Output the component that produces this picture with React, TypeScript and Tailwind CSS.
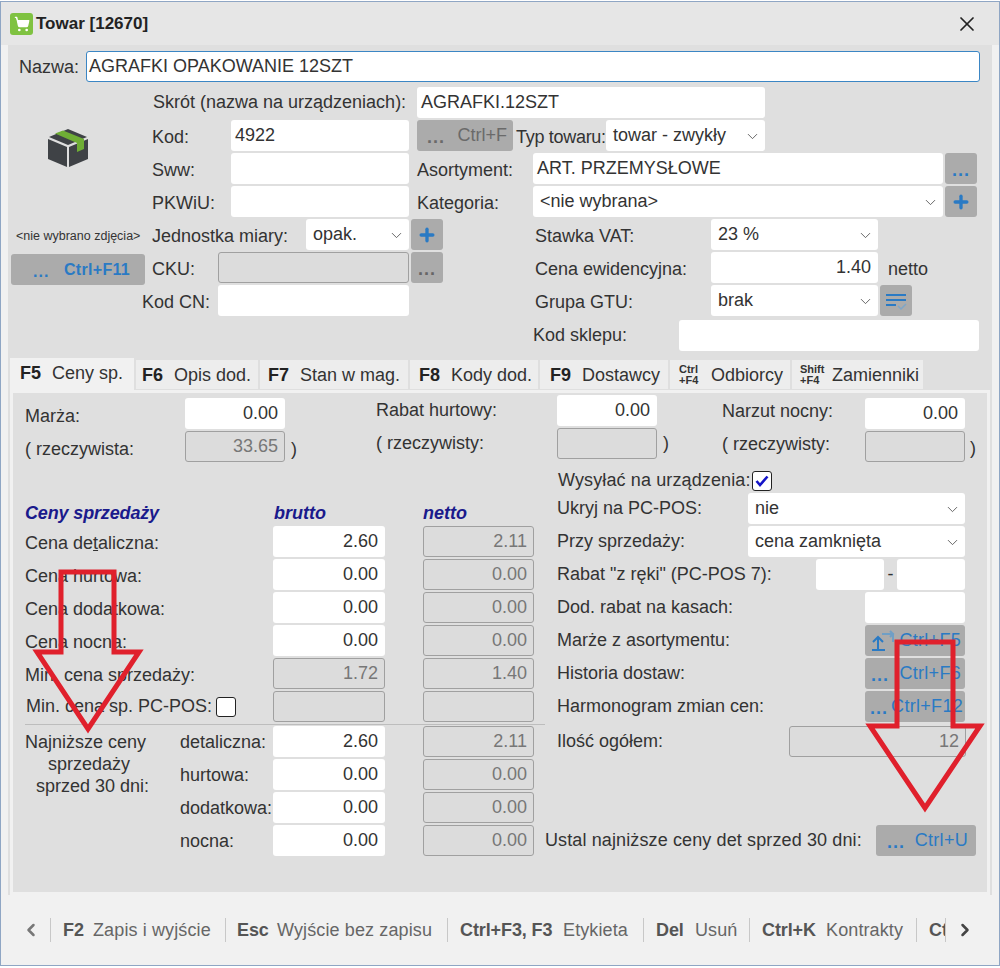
import React from 'react';
import { ChevronDown, ChevronLeft, ChevronRight, Plus, ShoppingCart, X } from 'lucide-react';

const Input = ({ value = '', className = '', right = false }: { value?: string; className?: string; right?: boolean }) => (
  <div className={`h-[31px] shrink-0 bg-white rounded-[3px] flex items-center text-[#333] whitespace-nowrap ${right ? 'justify-end px-[7px]' : 'px-[4px]'} ${className}`}>
    {value}
  </div>
);

const Disabled = ({ value = '', className = '' }: { value?: string; className?: string }) => (
  <div className={`h-[31px] shrink-0 bg-[#dcdcdc] border border-[#a0a0a0] rounded-[3px] flex items-center justify-end px-[6px] text-[#777] ${className}`}>
    {value}
  </div>
);

const Select = ({ value, className = '' }: { value: string; className?: string }) => (
  <div className={`h-[31px] shrink-0 bg-white rounded-[3px] flex items-center justify-between pl-[7px] pr-[4px] text-[#333] ${className}`}>
    <span className="whitespace-nowrap">{value}</span>
    <ChevronDown size={17} strokeWidth={1.25} className="text-[#555] shrink-0 mt-[2px]" />
  </div>
);

const Dots = ({ className = 'text-[#2a7ac4]' }: { className?: string }) => (
  <span className={`font-bold leading-none tracking-[1px] self-end pb-[5px] ${className}`}>...</span>
);

const IconButton = ({ children, className = '' }: { children: React.ReactNode; className?: string }) => (
  <div className={`w-[32px] h-[31px] shrink-0 bg-[#ababab] rounded-[3px] flex items-center justify-center ${className}`}>
    {children}
  </div>
);

const KeyButton = ({ keys, icon, className = '' }: { keys: string; icon?: React.ReactNode; className?: string }) => (
  <div className={`h-[31px] shrink-0 bg-[#ababab] rounded-[3px] flex items-center justify-between px-[6px] text-[#2a7ac4] whitespace-nowrap ${className}`}>
    {icon ?? <Dots />}
    <span className="tracking-[0.3px]">{keys}</span>
  </div>
);

const PlusIcon = () => <Plus size={20} strokeWidth={4} className="text-[#2a7ac4]" />;

const Row = ({ children, className = '' }: { children: React.ReactNode; className?: string }) => (
  <div className={`flex items-center h-[33px] shrink-0 ${className}`}>{children}</div>
);

const BoxIcon = () => (
  <svg width="40" height="38" viewBox="0 0 40 38">
    <path d="M20 0 L39 8 L20 16 L1 8 Z" fill="#3f4246" />
    <path d="M0 10 L19 18 V38 L0 30 Z" fill="#3f4246" />
    <path d="M21 18 L40 10 V30 L21 38 Z" fill="#3f4246" />
    <path d="M7 4.5 L15 1.5 L36 10 L36 20 L29 23 L29 14 Z" fill="#6fae35" />
  </svg>
);

const TabKey = ({ top, bottom }: { top: string; bottom: string }) => (
  <span className="w-[32px] shrink-0 flex flex-col text-[11px] leading-[11px] font-bold items-start">
    <span>{top}</span>
    <span>{bottom}</span>
  </span>
);

const tabs: { key?: string; top?: string; bottom?: string; label: string; box: string }[] = [
  { key: 'F6', label: 'Opis dod.', box: 'w-[122px] pl-[6px]' },
  { key: 'F7', label: 'Stan w mag.', box: 'w-[148px] pl-[8px]' },
  { key: 'F8', label: 'Kody dod.', box: 'w-[128px] pl-[9px]' },
  { key: 'F9', label: 'Dostawcy', box: 'w-[128px] pl-[10px]' },
  { top: 'Ctrl', bottom: '+F4', label: 'Odbiorcy', box: 'w-[120px] pl-[9px]' },
  { top: 'Shift', bottom: '+F4', label: 'Zamienniki', box: 'w-[131px] pl-[8px]' },
];

const priceRows = [
  { label: <>Cena de<u>t</u>aliczna:</>, id: 'det', brutto: '2.60', netto: '2.11' },
  { label: 'Cena hurtowa:', id: 'hurt', brutto: '0.00', netto: '0.00' },
  { label: 'Cena dodatkowa:', id: 'dod', brutto: '0.00', netto: '0.00' },
  { label: 'Cena nocna:', id: 'noc', brutto: '0.00', netto: '0.00' },
];

const lowestRows = [
  ['detaliczna:', '2.60', '2.11'],
  ['hurtowa:', '0.00', '0.00'],
  ['dodatkowa:', '0.00', '0.00'],
  ['nocna:', '0.00', '0.00'],
];

const footerItems = [
  { key: 'F2', label: 'Zapis i wyjście', box: 'w-[175px]', keyBox: 'w-[30px] ml-[12px]' },
  { key: 'Esc', label: 'Wyjście bez zapisu', box: 'w-[222px]', keyBox: 'w-[40px] ml-[11px]' },
  { key: 'Ctrl+F3, F3', label: 'Etykieta', box: 'w-[196px]', keyBox: 'w-[103px] ml-[12px]' },
  { key: 'Del', label: 'Usuń', box: 'w-[106px]', keyBox: 'w-[39px] ml-[12px]' },
  { key: 'Ctrl+K', label: 'Kontrakty', box: 'w-[167px]', keyBox: 'w-[64px] ml-[12px]' },
];

const FooterSep = () => <div className="w-px h-[24px] bg-[#c8c8c8] shrink-0" />;

export default function App() {
  return (
    <div className="relative w-[1000px] h-[968px] bg-white overflow-hidden text-[18px] text-[#333]" style={{ fontFamily: '"Liberation Sans", Arial, sans-serif' }}>
      <div className="mt-px h-[965px] flex flex-col bg-[#f1f1f1] border border-[#8fa6c4]">
        {/* Title */}
        <div className="h-[43px] shrink-0 bg-[#e6e6e6] flex items-center pl-[9px] pr-[20px]">
          <div className="w-[23px] h-[22px] rounded-[3px] bg-[#7fc241] flex items-center justify-center">
            <ShoppingCart size={16} fill="white" className="text-white" />
          </div>
          <span className="ml-[3px] font-bold text-[17px] text-[#222]">Towar [12670]</span>
          <X size={24} strokeWidth={1.75} className="ml-auto text-[#222]" />
        </div>

        {/* Body */}
        <div className="flex-1 flex flex-col bg-[#dfdfdf] ml-[7px] mr-[7px] relative">
          <div className="h-[41px] shrink-0 flex items-start pl-[11px] pt-[6px]">
            <span className="w-[67px] h-[31px] flex items-center pt-[2px]">Nazwa:</span>
            <Input value="AGRAFKI OPAKOWANIE 12SZT" className="w-[894px] border border-[#3b86c4] !px-[2px]" />
          </div>

          {/* Top form */}
          <div className="flex h-[269px] shrink-0">
            <div className="w-[134px] shrink-0 flex flex-col items-start">
              <div className="mt-[43px] ml-[40px] h-[38px]"><BoxIcon /></div>
              <div className="mt-[62px] ml-[8px] h-[15px] leading-[15px] text-[12.5px] whitespace-nowrap">&lt;nie wybrano zdjęcia&gt;</div>
              <KeyButton keys="Ctrl+F11" className="mt-[10px] ml-[3px] w-[134px] pl-[22px] pr-[15px] text-[16px] font-bold" />
            </div>
            <div className="flex flex-col">
              <Row className="pl-[11px]">
                <span className="w-[264px] whitespace-nowrap">Skrót (nazwa na urządzeniach):</span>
                <Input value="AGRAFKI.12SZT" className="w-[348px]" />
              </Row>
              <Row className="pl-[10px] [&>span]:pt-[4px]">
                <span className="w-[79px]">Kod:</span>
                <Input value="4922" className="w-[178px]" />
                <div className="w-[96px] h-[31px] ml-[8px] bg-[#ababab] rounded-[3px] flex items-center justify-between pl-[10px] pr-[6px] text-[#6a6a6a] whitespace-nowrap">
                  <Dots className="text-[#6a6a6a]" />
                  <b className="font-normal">Ctrl+F</b>
                </div>
                <span className="w-[93px] pl-[3px] whitespace-nowrap tracking-[-0.3px]">Typ towaru:</span>
                <Select value="towar - zwykły" className="w-[159px]" />
              </Row>
              <Row className="pl-[10px] [&>span]:pt-[4px]">
                <span className="w-[79px]">Sww:</span>
                <Input className="w-[178px]" />
                <span className="ml-[8px] w-[116px]">Asortyment:</span>
                <Input value="ART. PRZEMYSŁOWE" className="w-[410px]" />
                <IconButton className="ml-[2px]"><Dots /></IconButton>
              </Row>
              <Row className="pl-[10px] [&>span]:pt-[4px]">
                <span className="w-[79px]">PKWiU:</span>
                <Input className="w-[178px]" />
                <span className="ml-[8px] w-[116px]">Kategoria:</span>
                <Select value="<nie wybrana>" className="w-[410px]" />
                <IconButton className="ml-[2px]"><PlusIcon /></IconButton>
              </Row>
              <Row className="pl-[10px] [&>span]:pt-[4px]">
                <span className="w-[154px] whitespace-nowrap">Jednostka miary:</span>
                <Select value="opak." className="w-[103px]" />
                <IconButton className="ml-[2px]"><PlusIcon /></IconButton>
                <span className="ml-[92px] w-[176px]">Stawka VAT:</span>
                <Select value="23 %" className="w-[167px]" />
              </Row>
              <Row className="pl-[10px] [&>span]:pt-[4px]">
                <span className="w-[66px]">CKU:</span>
                <Disabled className="w-[191px] bg-[#d8d8d8]" />
                <IconButton className="ml-[2px]"><Dots className="text-[#666]" /></IconButton>
                <span className="ml-[92px] w-[176px] whitespace-nowrap">Cena ewidencyjna:</span>
                <Input value="1.40" right className="w-[167px]" />
                <span className="ml-[10px]">netto</span>
              </Row>
              <Row className="[&>span]:pt-[4px]">
                <span className="w-[76px] whitespace-nowrap">Kod CN:</span>
                <Input className="w-[191px]" />
                <span className="ml-[126px] w-[176px]">Grupa GTU:</span>
                <Select value="brak" className="w-[167px]" />
                <IconButton className="ml-[2px]">
                  <svg width="22" height="20" viewBox="0 0 22 20" fill="none" stroke="#2a7ac4" strokeWidth="2">
                    <path d="M1 4h20M1 9h20M1 14h10" />
                    <path d="M13 15l3 3 5-5" stroke="#7ea6c8" strokeWidth="1.5" />
                  </svg>
                </IconButton>
              </Row>
              <Row className="pl-[391px] mt-[2px]">
                <span className="w-[146px] whitespace-nowrap">Kod sklepu:</span>
                <Input className="w-[300px]" />
              </Row>
            </div>
          </div>

          {/* Tabs */}
          <div className="flex items-stretch h-[29px] shrink-0 pl-[2px] mt-[5px] gap-[2px]">
            <div className="w-[124px] -mt-[2px] -mb-[1px] bg-[#f1f1f1] flex items-center pl-[10px] pb-[2px]">
              <b className="w-[32px] text-[#222]">F5</b>
              <span className="whitespace-nowrap">Ceny sp.</span>
            </div>
            {tabs.map(t => (
              <div key={t.label} className={`${t.box} bg-[#ededed] flex items-center pt-[1px]`}>
                {t.key ? <b className="w-[32px] shrink-0 text-[#222]">{t.key}</b> : <TabKey top={t.top ?? ''} bottom={t.bottom ?? ''} />}
                <span className="whitespace-nowrap">{t.label}</span>
              </div>
            ))}
          </div>

          {/* Panel */}
          <div className="flex-1 mt-px border-[3px] border-[#f1f1f1] ml-[2px] mr-[2px] bg-[#dfdfdf] pl-[12px]">
            <div className="flex h-[71px]">
              <div className="w-[351px] shrink-0 flex flex-col pt-[4px]">
                <Row className="[&>span]:pt-[6px]">
                  <span className="w-[160px]">Marża:</span>
                  <Input value="0.00" right className="w-[100px]" />
                </Row>
                <Row className="[&>span]:pt-[6px]">
                  <span className="w-[160px]">( rzeczywista:</span>
                  <Disabled value="33.65" className="w-[100px]" />
                  <span className="ml-[6px]">)</span>
                </Row>
              </div>
              <div className="w-[346px] shrink-0 flex flex-col pt-[1px]">
                <Row>
                  <span className="w-[181px]">Rabat hurtowy:</span>
                  <Input value="0.00" right className="w-[100px]" />
                </Row>
                <Row>
                  <span className="w-[181px]">( rzeczywisty:</span>
                  <Disabled className="w-[100px]" />
                  <span className="ml-[6px]">)</span>
                </Row>
              </div>
              <div className="flex flex-col pt-[4px]">
                <Row className="[&>span]:pb-[4px]">
                  <span className="w-[143px]">Narzut nocny:</span>
                  <Input value="0.00" right className="w-[100px]" />
                </Row>
                <Row className="[&>span]:pb-[4px]">
                  <span className="w-[143px]">( rzeczywisty:</span>
                  <Disabled className="w-[100px]" />
                  <span className="ml-[5px] !pb-0 !pt-[4px]">)</span>
                </Row>
              </div>
            </div>

            <div className="flex">
              {/* Prices */}
              <div className="w-[520px] shrink-0 flex flex-col pt-[38px]">
                <div className="h-[22px] flex items-center font-bold italic text-[#1a1a8c]">
                  <span className="w-[249px] tracking-[-0.15px]">Ceny sprzedaży</span>
                  <span className="w-[149px]">brutto</span>
                  <span>netto</span>
                </div>
                <div className="mt-[1px] flex flex-col">
                  {priceRows.map(r => (
                    <Row key={r.id} className="[&>span]:pt-[4px]">
                      <span className="w-[248px]">{r.label}</span>
                      <Input value={r.brutto} right className="w-[112px]" />
                      <Disabled value={r.netto} className="w-[111px] ml-[38px]" />
                    </Row>
                  ))}
                  <Row className="[&>span]:pt-[4px]">
                    <span className="w-[248px]">Min. cena sprzedaży:</span>
                    <Disabled value="1.72" className="w-[112px]" />
                    <Disabled value="1.40" className="w-[111px] ml-[38px]" />
                  </Row>
                  <Row>
                    <span className="w-[190px] ml-[1px] whitespace-nowrap">Min. cena sp. PC-POS:</span>
                    <div className="w-[20px] h-[20px] bg-white border border-[#222] rounded-[3px]" />
                    <Disabled className="w-[112px] ml-[37px]" />
                    <Disabled className="w-[111px] ml-[38px]" />
                  </Row>
                </div>
                <div className="h-px bg-[#bdbdbd] mt-px" />
                <div className="flex">
                  <div className="w-[124px] shrink-0 leading-[22px] pt-[6px] whitespace-nowrap flex flex-col">
                    <span>Najniższe ceny</span>
                    <span className="pl-[23px]">sprzedaży</span>
                    <span className="pl-[11px]">sprzed 30 dni:</span>
                  </div>
                  <div className="flex flex-col pl-[31px]">
                    {lowestRows.map(([label, brutto, netto]) => (
                      <Row key={label} className="[&>span]:pt-[2px]">
                        <span className="w-[93px]">{label}</span>
                        <Input value={brutto} right className="w-[112px]" />
                        <Disabled value={netto} className="w-[111px] ml-[38px]" />
                      </Row>
                    ))}
                  </div>
                </div>
              </div>

              {/* Right column */}
              <div className="w-[432px] flex flex-col pl-[12px] pt-[5px]">
                <div className="flex items-center h-[23px]">
                  <span className="ml-[1px] w-[194px] whitespace-nowrap tracking-[0.12px]">Wysyłać na urządzenia:</span>
                  <div className="w-[20px] h-[20px] bg-white border border-[#222] rounded-[3px] flex items-center justify-center">
                    <svg width="14" height="12" viewBox="0 0 14 12" fill="none" stroke="#1414c8" strokeWidth="2.6"><path d="M1.5 6l3.5 4 7.5-8.5" /></svg>
                  </div>
                </div>
                <Row>
                  <span className="w-[191px]">Ukryj na PC-POS:</span>
                  <Select value="nie" className="w-[217px]" />
                </Row>
                <Row>
                  <span className="w-[191px]">Przy sprzedaży:</span>
                  <Select value="cena zamknięta" className="w-[217px]" />
                </Row>
                <Row>
                  <span className="w-[259px] whitespace-nowrap">Rabat "z ręki" (PC-POS 7):</span>
                  <Input className="w-[68px]" />
                  <span className="w-[13px] text-center">-</span>
                  <Input className="w-[68px]" />
                </Row>
                <Row>
                  <span className="w-[308px]">Dod. rabat na kasach:</span>
                  <Input className="w-[100px]" />
                </Row>
                <Row>
                  <span className="w-[308px]">Marże z asortymentu:</span>
                  <KeyButton
                    keys="Ctrl+F5"
                    className="w-[100px] !pr-[4px]"
                    icon={
                      <svg width="24" height="22" viewBox="0 0 24 22" fill="none" stroke="#2a7ac4" strokeWidth="2">
                        <path d="M1 20h13M7 20V8M2 12l5-5 5 5" />
                        <path d="M11 4h11v8M19 1l3 3-3 3" stroke="#6f9fc6" />
                      </svg>
                    }
                  />
                </Row>
                <Row>
                  <span className="w-[308px]">Historia dostaw:</span>
                  <KeyButton keys="Ctrl+F6" className="w-[100px] !pr-[4px]" />
                </Row>
                <Row>
                  <span className="w-[308px]">Harmonogram zmian cen:</span>
                  <KeyButton keys="Ctrl+F12" className="w-[100px] !pr-[2px] !pl-[5px]" />
                </Row>
                <Row className="mt-[2px]">
                  <span className="w-[232px]">Ilość ogółem:</span>
                  <Disabled value="12" className="w-[177px]" />
                </Row>
                <Row className="mt-[66px] -ml-[12px]">
                  <span className="w-[331px] whitespace-nowrap tracking-[0.12px]">Ustal najniższe ceny det sprzed 30 dni:</span>
                  <KeyButton keys="Ctrl+U" className="w-[100px] !pl-[11px] !pr-[8px]" />
                </Row>
              </div>
            </div>
          </div>
        </div>

        {/* Footer */}
        <div className="h-[70px] shrink-0 bg-[#f1f1f1] flex items-center pl-[20px] text-[#666] whitespace-nowrap overflow-hidden">
          <ChevronLeft size={20} strokeWidth={3} className="text-[#777] mr-[9px] shrink-0" />
          {footerItems.map(i => (
            <div key={i.key} className={`${i.box} shrink-0 flex items-center`}>
              <FooterSep />
              <b className={`${i.keyBox} shrink-0 text-[#555] tracking-[-0.1px]`}>{i.key}</b>
              <span className="tracking-[0.12px]">{i.label}</span>
            </div>
          ))}
          <FooterSep />
          <b className="ml-[12px] w-[16px] overflow-hidden text-[#555] shrink-0">Ctrl</b>
          <FooterSep />
          <ChevronRight size={20} strokeWidth={3} className="ml-[9px] text-[#444] shrink-0" />
        </div>
      </div>

      {/* annotation arrows drawn over the form */}
      <svg className="absolute inset-0 pointer-events-none" width="1000" height="968" fill="none" stroke="#e0202c" strokeWidth="5" strokeLinejoin="miter">
        <path d="M61 572H114V652H139L88 729L37 652H61Z" />
        <path d="M897 642H953V726H980L925 808L870 726H897Z" />
      </svg>
    </div>
  );
}
